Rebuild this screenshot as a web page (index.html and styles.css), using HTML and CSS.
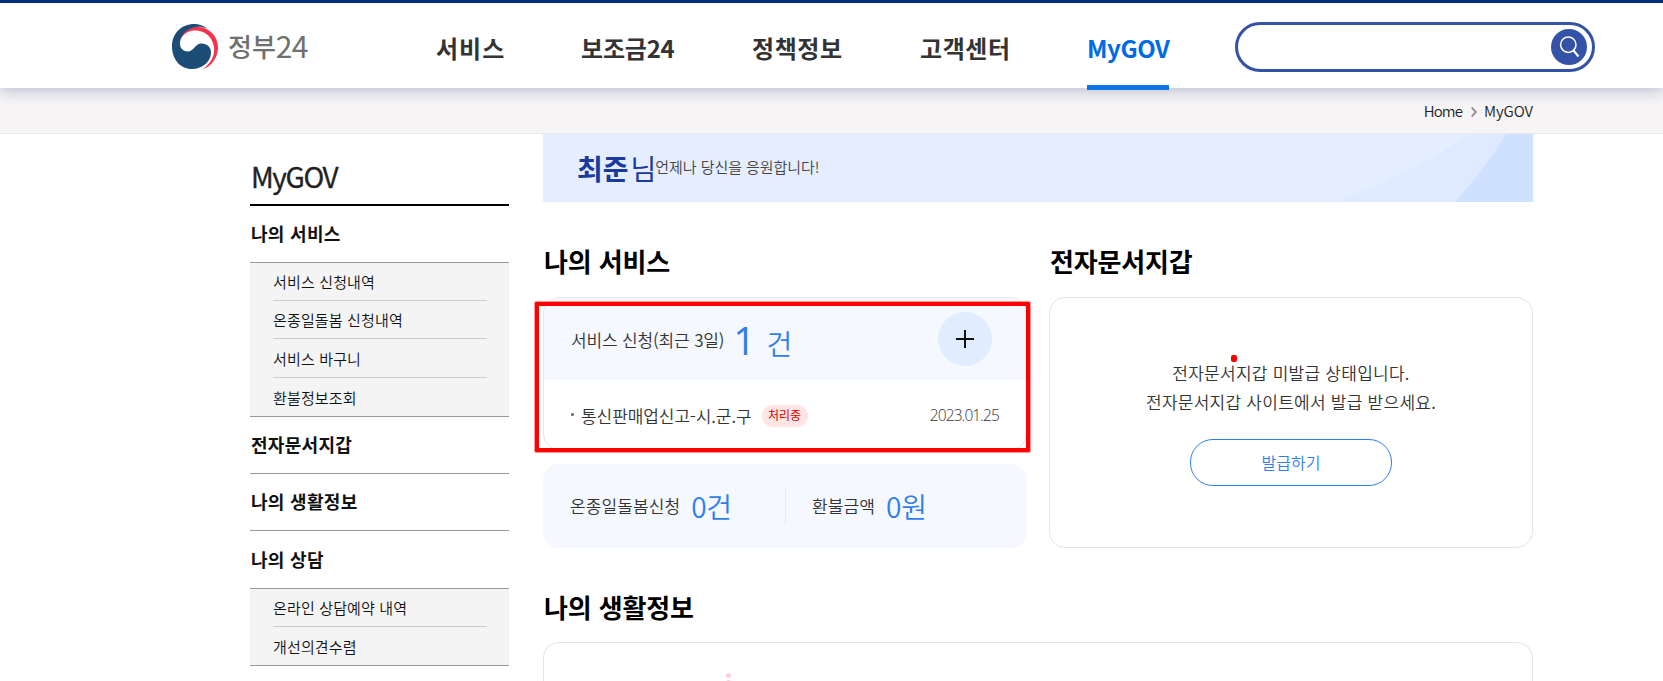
FILE: index.html
```html
<!DOCTYPE html>
<html lang="ko">
<head>
<meta charset="utf-8">
<title>MyGOV | 정부24</title>
<link rel="stylesheet" href="styles.css">
</head>
<body>
<header class="header">
  <a class="logo">
    <svg class="logo-mark" width="47" height="45" viewBox="0 0 47 45">
      <path fill="#f5334f" d="M8 13C11 4 22 1 31 3.500C41 7 46.500 15 46 25C45 34 40 42 31 45C39 39 43 32 42 23C40 11 31 6 22 6.500C15 7 10 11 8 17Z"/>
      <path fill="#1b4d76" d="M22.500 0C9 0 0 9.500 0 22.500C0 35 8 45 20 45C31 45 39 37 39 28.500C39 23 35 19.500 29.500 19.500C23 19.500 22 27.500 15.500 27.500C11 27.500 7.500 24 8 18C9 9 17 3.500 26 2.800C29 2.600 32 3.200 35 4.500C32 1.500 27 0 22.500 0Z"/>
    </svg>
    <span class="logo-text">정부<span class="logo-num">24</span></span>
  </a>
  <nav class="nav">
    <a class="nav-item n1">서비스</a>
    <a class="nav-item n2">보조금24</a>
    <a class="nav-item n3">정책정보</a>
    <a class="nav-item n4">고객센터</a>
    <a class="nav-item n5 active">MyGOV</a>
  </nav>
  <div class="search">
    <button class="search-btn" aria-label="검색">
      <svg width="36" height="36" viewBox="0 0 36 36" fill="none" stroke="#fff" stroke-width="1.500"><circle cx="17.300" cy="15.700" r="7.700"/><path d="M22.500 21.500L27.500 27.500" stroke-width="2"/></svg>
    </button>
  </div>
</header>
<div class="crumbs">
  <span class="crumb-home">Home</span>
  <svg width="6" height="10" viewBox="0 0 6 10" fill="none" stroke="#8d8589" stroke-width="1.700"><path d="M0.700 0.700L4.800 5L0.700 9.300"/></svg>
  <span class="crumb-here">MyGOV</span>
</div>
<div class="page">
  <aside class="side">
    <h1 class="side-title">MyGOV</h1>
    <h2 class="side-head">나의 서비스</h2>
    <ul class="side-sub">
      <li>서비스 신청내역</li>
      <li>온종일돌봄 신청내역</li>
      <li class="tall">서비스 바구니</li>
      <li class="tall">환불정보조회</li>
    </ul>
    <h2 class="side-head">전자문서지갑</h2>
    <h2 class="side-head">나의 생활정보</h2>
    <h2 class="side-head last">나의 상담</h2>
    <ul class="side-sub">
      <li>온라인 상담예약 내역</li>
      <li class="tall">개선의견수렴</li>
    </ul>
  </aside>
  <main class="main">
    <section class="banner">
      <svg class="banner-art" width="280" height="68" viewBox="0 0 280 68"><path fill="#dfe9ff" d="M84 68Q160 39 217 0H280V68Z"/><path fill="#cee1ff" d="M202 68Q231 36 253 0H280V68Z"/></svg>
      <strong class="name">최준</strong><span class="nim">님</span><span class="cheer">언제나 당신을 응원합니다!</span>
    </section>
    <div class="cols">
      <section class="col">
        <h2 class="title">나의 서비스</h2>
        <div class="card service">
          <div class="service-top">
            <span class="label">서비스 신청(최근 3일)</span><span class="one">1</span><span class="unit">건</span>
            <button class="plus" aria-label="더보기"><svg width="18" height="18" viewBox="0 0 18 18" stroke="#111" stroke-width="2"><path d="M9 0V18M0 9H18"/></svg></button>
          </div>
          <div class="service-row">
            <i class="dot"></i><span class="doc">통신판매업신고-시.군.구</span><span class="badge">처리중</span><time class="date">2023.01.25</time>
          </div>
          <div class="highlight"></div>
        </div>
        <div class="summary">
          <div class="sum care"><span class="label2">온종일돌봄신청</span><span class="amount">0건</span></div>
          <div class="sum refund"><span class="label2">환불금액</span><span class="amount">0원</span></div>
        </div>
      </section>
      <section class="col">
        <h2 class="title">전자문서지갑</h2>
        <div class="card wallet">
          <i class="red-dot"></i>
          <p class="msg">전자문서지갑 미발급 상태입니다.</p>
          <p class="msg">전자문서지갑 사이트에서 발급 받으세요.</p>
          <button class="issue">발급하기</button>
        </div>
      </section>
    </div>
    <h2 class="title life">나의 생활정보</h2>
    <div class="card life-card"><i class="pink"></i><i class="pink"></i></div>
  </main>
</div>
</body>
</html>
```
FILE: styles.css
```css
* { box-sizing: border-box; margin: 0; padding: 0; }
html, body { height: 681px; overflow: hidden; }
body { background: #fff; color: #333; font-family: "Noto Sans CJK KR", "Noto Sans", sans-serif; font-weight: 350; }
button { font: inherit; border: 0; background: none; }
ul { list-style: none; }
svg { display: block; flex: none; }
span, a, time, h1, h2, p { white-space: nowrap; }

.header { position: relative; z-index: 1; display: flex; height: 88px; padding-left: 172px; border-top: 3px solid #002d73; background: #fff; box-shadow: 0 2px 14px rgba(60, 90, 140, .38); }
.logo { display: flex; width: 264px; padding-top: 21px; }
.logo-text { margin-left: 9px; font-size: 26px; line-height: 44px; font-weight: 500; color: #707070; }
.logo-num { font-size: 30px; font-weight: 400; letter-spacing: -.8px; line-height: 30px; vertical-align: -1px; }
.nav { display: flex; }
.nav-item { height: 87px; padding-top: 28px; font-size: 24px; font-weight: 700; line-height: 34px; letter-spacing: .6px; }
.n1 { width: 145px; letter-spacing: 1px; }
.n2 { width: 171px; letter-spacing: -.2px; }
.n3 { width: 168px; }
.n4 { width: 167px; }
.n5 { width: 82px; color: #006be6; letter-spacing: -.4px; border-bottom: 5px solid #0f73e8; }
.search { display: flex; justify-content: flex-end; width: 360px; height: 50px; margin: 19px 0 0 66px; padding: 4px 5px; border: 3px solid #3453a6; border-radius: 25px; }
.search-btn { width: 36px; height: 36px; border-radius: 50%; background: #3453a6; }

.crumbs { display: flex; justify-content: flex-end; align-items: center; height: 46px; padding-right: 130px; border-bottom: 1px solid #e9e8ea; background: #f6f4f5; font-size: 15px; color: #222; }
.crumbs svg { margin: 3px 7px 0 9px; }
.crumb-home { letter-spacing: -.9px; }
.crumb-here { letter-spacing: -.1px; }

.page { display: flex; gap: 34px; padding-left: 250px; }
.side { width: 259px; flex: none; }
.side-title { height: 72px; padding: 21px 0 0 1px; border-bottom: 2px solid #000; font-size: 28px; line-height: 42px; font-weight: 400; letter-spacing: -1.4px; color: #222; -webkit-text-stroke: .3px #222; }
.side-head { height: 57px; padding-left: 1px; border-bottom: 1px solid #999; font-size: 18px; line-height: 55px; font-weight: 700; color: #111; letter-spacing: .3px; }
.side-head.last { height: 58px; line-height: 56px; }
.side-sub { padding: 0 22px 0 23px; border-bottom: 1px solid #999; background: #f4f4f4; }
.side-sub li { height: 38px; border-bottom: 1px solid #ccc; font-size: 15px; line-height: 38px; color: #111; letter-spacing: .15px; }
.side-sub li.tall { height: 39px; line-height: 39px; }
.side-sub li:last-child { height: 38px; border-bottom: 0; }

.main { width: 990px; flex: none; }
.banner { position: relative; display: flex; height: 68px; padding-left: 34px; background: #e4eeff; color: #1a3a9c; }
.banner-art { position: absolute; right: 0; bottom: 0; }
.name { font-size: 28px; font-weight: 700; line-height: 69px; }
.nim { margin: 0 -1px 0 2px; font-size: 28px; font-weight: 400; line-height: 69px; }
.cheer { font-size: 15px; line-height: 65px; color: #444; letter-spacing: -.05px; }
.cols { display: flex; gap: 22px; }
.col { width: 484px; }
.title { height: 95px; padding: 41px 0 0 1px; font-size: 26px; font-weight: 700; line-height: 36px; letter-spacing: -.15px; color: #000; }
.card { border: 1px solid #e4e5ec; border-radius: 16px; }
.service { position: relative; height: 153px; }
.service-top { display: flex; height: 82px; padding-left: 27px; border-radius: 15px 15px 0 0; background: #f5f8ff; }
.label { font-size: 17px; line-height: 83px; letter-spacing: -.15px; }
.one { margin-left: 9px; font-family: "Open Sans", "Noto Sans", sans-serif; font-size: 39px; line-height: 84px; font-weight: 400; color: #2f7fea; }
.unit { margin-left: 11px; font-size: 28px; line-height: 91px; color: #2f7fea; }
.plus { display: flex; align-items: center; justify-content: center; width: 54px; height: 54px; margin: 14px 34px 0 auto; border-radius: 50%; background: #e1ecfe; }
.service-row { display: flex; align-items: center; height: 71px; padding: 0 27px; }
.dot { width: 3px; height: 3px; margin-top: -2px; background: #777; border-radius: 1px; }
.doc { margin-left: 7px; font-size: 17px; letter-spacing: -.07px; }
.badge { width: 46px; height: 22px; margin-left: 10px; border-radius: 11px; background: #ffe4e4; color: #d80000; font-size: 12px; line-height: 20px; text-align: center; font-weight: 400; }
.date { margin: -2px 0 0 auto; font-family: "Open Sans", "Noto Sans", sans-serif; font-weight: 300; font-size: 15.5px; letter-spacing: -.9px; color: #333; }
.highlight { position: absolute; left: -9px; top: 4px; width: 495px; height: 150px; border: 4px solid #f00; border-radius: 1px; box-shadow: 0 0 0 1px rgba(255, 0, 0, .4); }
.summary { display: flex; height: 84px; margin-top: 14px; border-radius: 16px; background: #f5f8ff; }
.sum { display: flex; align-items: center; height: 38px; margin-top: 23px; }
.care { width: 243px; padding-left: 27px; border-right: 1px solid #e1ebfc; }
.refund { padding-left: 26px; }
.label2 { font-size: 17px; margin-top: -1px; letter-spacing: .1px; }
.amount { margin-left: 11px; font-size: 28px; color: #2f7fea; letter-spacing: -.2px; }
.wallet { position: relative; height: 251px; padding-top: 60px; text-align: center; }
.msg { font-size: 17px; line-height: 29px; letter-spacing: .25px; }
.issue { width: 202px; height: 47px; margin-top: 23px; padding-bottom: 2px; border: 1px solid #2f7fea; border-radius: 23px; color: #2f7fea; font-size: 16px; }
.red-dot { position: absolute; left: 181px; top: 57px; width: 6px; height: 7px; border-radius: 2px; background: #f00; }
.life { height: 94px; padding-top: 41px; }
.life-card { display: flex; flex-direction: column; gap: 2px; height: 39px; padding: 30px 0 0 182px; border-bottom: 0; border-radius: 16px 16px 0 0; overflow: hidden; }
.pink { flex: none; width: 5px; height: 5px; border-radius: 50%; background: #ffd0da; }
```
